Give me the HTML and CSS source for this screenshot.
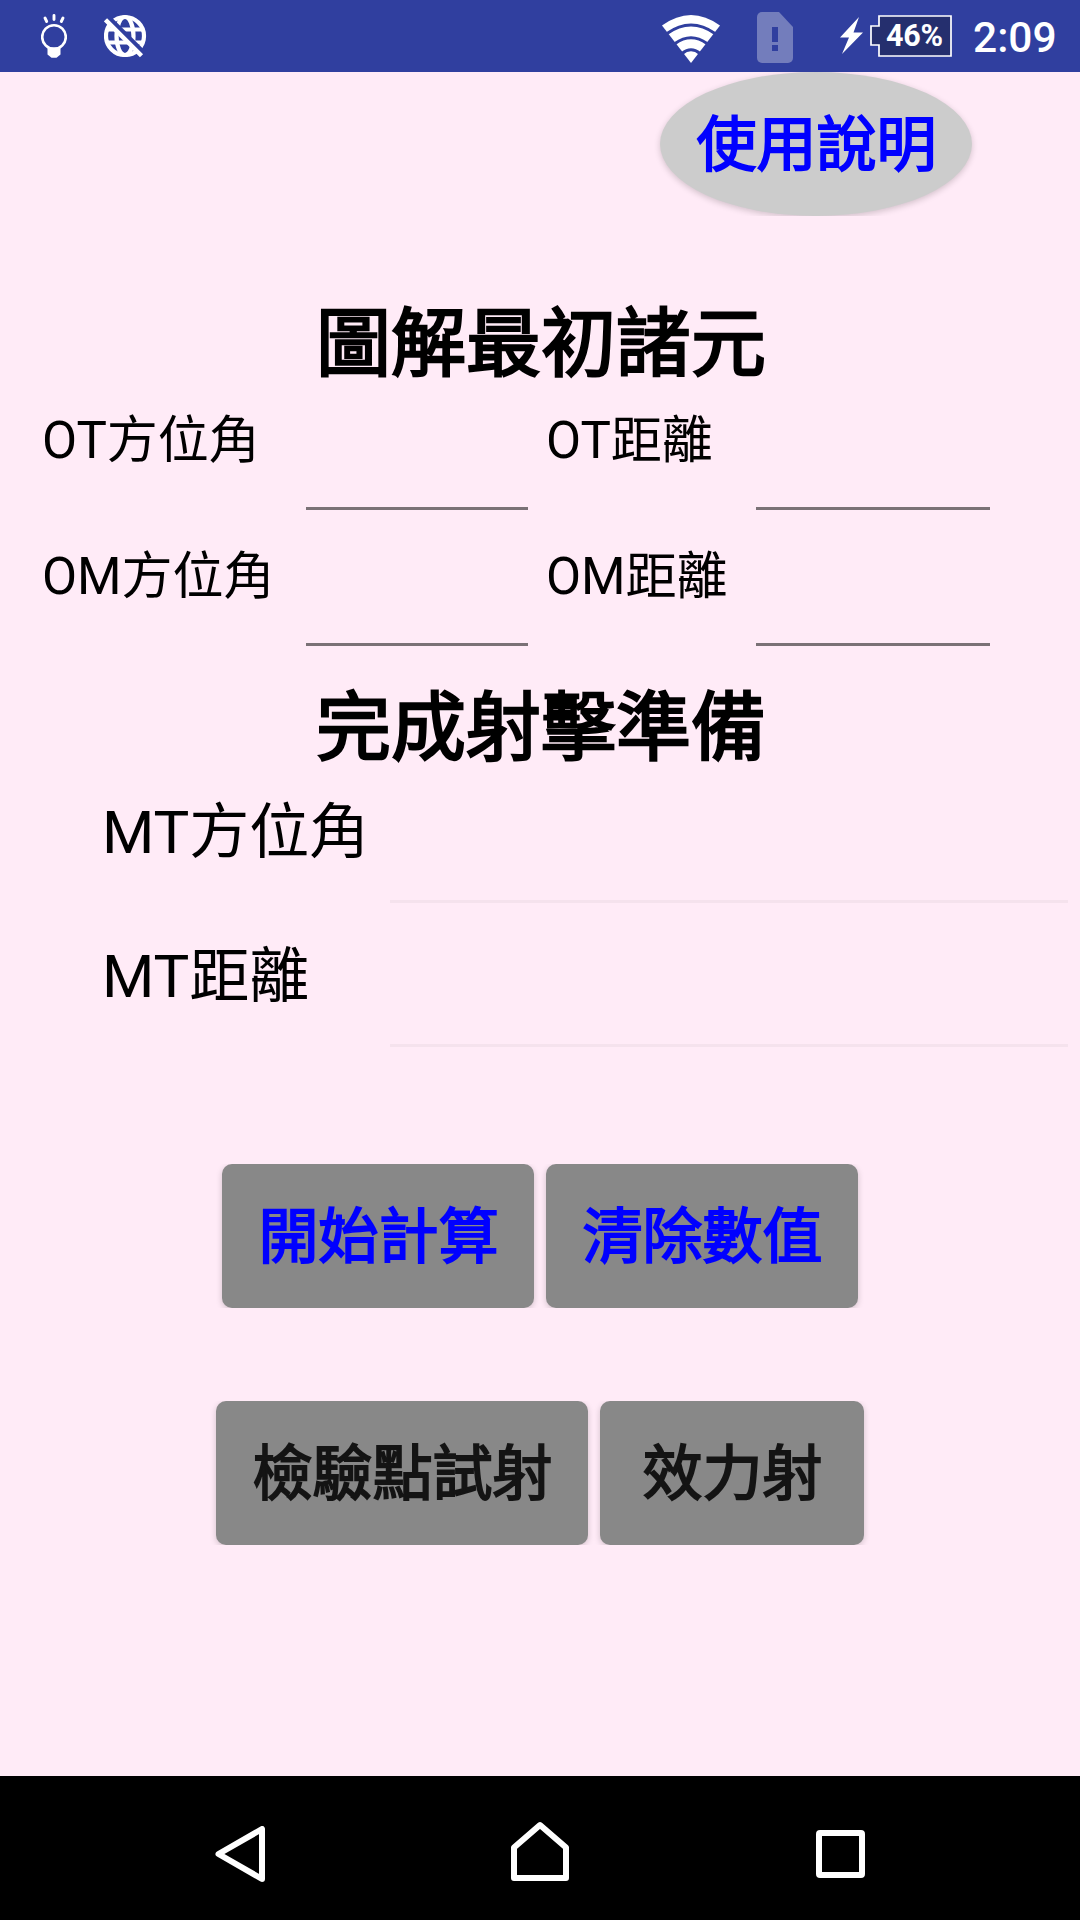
FILE: index.html
```html
<!DOCTYPE html>
<html lang="zh-Hant">
<head>
<meta charset="utf-8">
<title>圖解最初諸元</title>
<link rel="stylesheet" href="styles.css">
</head>
<body>
<header class="status">
  <svg class="bulb" width="26" height="44" viewBox="0 0 26 44"><circle cx="13" cy="23" r="11.800" fill="none" stroke="#fff" stroke-width="2.600"/><path d="M6.500 33.500h13v7l-4 3.200h-5l-4-3.200z" fill="#fff"/><path d="M13 1.500v4M4 4l1.700 3.500M22 4l-1.700 3.500" fill="none" stroke="#fff" stroke-width="2.900" stroke-linecap="round"/></svg>
  <svg class="globe" width="44" height="44" viewBox="0 0 44 44"><g fill="none" stroke="#fff" stroke-width="4.200"><circle cx="21" cy="22" r="19"/><ellipse cx="21" cy="22" rx="8.500" ry="19"/><path d="M4 15.500h35M4 28.500h35"/></g><path d="M4 3 40.500 39.500" stroke="#303f9f" stroke-width="4.600"/><path d="M1.500 5.800 37.500 41.800" stroke="#fff" stroke-width="4.400"/></svg>
  <svg class="wifi" width="58" height="48" viewBox="0 0 58 48"><path d="M0 10.500Q29-10.500 58 10.500L29 48z" fill="#fff"/><path d="M5 18.500Q29 1.500 53 18.500M13 28.500Q29 17 45 28.500M20 38.500Q29 31 38 38.500" fill="none" stroke="#303f9f" stroke-width="3"/></svg>
  <svg class="sim" width="36" height="51" viewBox="0 0 36 51"><path d="M5 0h17l14 15v31a5 5 0 0 1-5 5H5a5 5 0 0 1-5-5V5a5 5 0 0 1 5-5z" fill="#737dbc"/><path d="M15 15h6v15h-6zM15 33h6v6h-6z" fill="#303f9f"/></svg>
  <svg class="bolt" width="23" height="37" viewBox="0 0 23 37"><path d="M19 0 0 20.500h9L2 37l21-21.500h-9.500z" fill="#fff"/></svg>
  <div class="battery">
    <svg width="82" height="42" viewBox="0 0 82 42"><path d="M9 1h72v40H9V30H1V11h8z" fill="#252f6e" stroke="#fff" stroke-width="1.700"/></svg>
    <span class="percent">46%</span>
  </div>
  <time class="clock">2:09</time>
</header>
<main class="screen">
  <button class="help">使用說明</button>
  <h1 class="title">圖解最初諸元</h1>
  <div class="inputs">
    <label for="ot-az">OT方位角</label><input id="ot-az" class="az"><label for="ot-d">OT距離</label><input id="ot-d">
    <label for="om-az">OM方位角</label><input id="om-az" class="az"><label for="om-d">OM距離</label><input id="om-d">
  </div>
  <h1 class="title second">完成射擊準備</h1>
  <div class="results">
    <label for="mt-az">MT方位角</label><input id="mt-az" disabled>
    <label for="mt-d">MT距離</label><input id="mt-d" disabled>
  </div>
  <div class="actions">
    <button class="btn">開始計算</button><button class="btn">清除數值</button>
  </div>
  <div class="actions modes">
    <button class="btn dark wide">檢驗點試射</button><button class="btn dark narrow">效力射</button>
  </div>
</main>
<nav class="nav">
  <svg width="50" height="56" viewBox="0 0 50 56"><path d="M47 3v50L3.500 28z" fill="none" stroke="#fff" stroke-width="6" stroke-linejoin="round"/></svg>
  <svg width="58" height="60" viewBox="0 0 58 60"><path d="M3 57V26.500L29 4l26 22.500V57z" fill="none" stroke="#fff" stroke-width="6" stroke-linejoin="round"/></svg>
  <svg width="49" height="48" viewBox="0 0 49 48"><rect x="3" y="3" width="43" height="42" rx="1" fill="none" stroke="#fff" stroke-width="6" stroke-linejoin="round"/></svg>
</nav>
</body>
</html>
```
FILE: styles.css
```css
* { box-sizing: border-box; }
body {
  margin: 0;
  width: 1080px;
  height: 1920px;
  display: flex;
  flex-direction: column;
  overflow: hidden;
  background: #ffebf7;
  color: #000;
  font-family: Roboto, "Noto Sans CJK TC", sans-serif;
}
svg { display: block; flex: none; }

.status {
  height: 72px;
  display: flex;
  align-items: flex-start;
  background: #303f9f;
  color: #fff;
}
.bulb { margin: 14px 0 0 41px; }
.globe { margin: 14px 0 0 37px; }
.wifi { margin: 15px 0 0 514px; }
.sim { margin: 12px 0 0 37px; }
.bolt { margin: 17px 0 0 47px; }
.battery { display: grid; margin: 15px 0 0 7px; width: 82px; height: 42px; }
.battery > * { grid-area: 1 / 1; }
.percent { padding-left: 16px; font-size: 30.5px; font-weight: 700; line-height: 42px; letter-spacing: -.3px; }
.clock { margin-left: 21px; font-size: 42.5px; font-weight: 500; line-height: 75px; }

.screen { flex: 1; display: flex; flex-direction: column; }
/* Bold text is the regular face thickened by 1/32 em. */
button, .title { font-weight: 400; -webkit-text-stroke: .03125em currentColor; }
button {
  border: 0;
  padding: 4px 0 1px 1px;
  height: 144px;
  color: #00f;
  font: 400 60px/139px Roboto, "Noto Sans CJK TC", sans-serif;
  box-shadow: 0 2px 6px rgba(0, 0, 0, .18);
  clip-path: inset(0 -8px);
}
.help {
  align-self: flex-end;
  width: 312px;
  margin-right: 108px;
  border-radius: 50%;
  background: #ccc;
}
.title {
  margin: 73px 0 0;
  padding-left: 2px;
  height: 109px;
  line-height: 110px;
  font-size: 75px;
  text-align: center;
}
.inputs {
  display: grid;
  grid-template-columns: 259px 244px 206px 242px;
  grid-template-rows: 136px 136px;
  padding-left: 43px;
  font-size: 51px;
  line-height: 86px;
}
.inputs label:nth-of-type(odd) { margin-left: -1px; }
input {
  height: 3px;
  width: auto;
  min-width: 0;
  padding: 0;
  border: 0;
  background: #7a7176;
}
.inputs input { margin: 109px 4px 0; }
.inputs .az { margin-right: 18px; }
.second { margin-top: 3px; }
.results {
  display: grid;
  grid-template-columns: 288px 678px;
  grid-template-rows: 144px 144px;
  padding-left: 102px;
  font-size: 60px;
  line-height: 102px;
}
.results input { margin-top: 118px; background: #f5e2ed; }
.actions { display: flex; justify-content: center; gap: 12px; margin-top: 94px; }
.modes { margin-top: 93px; }
.btn { width: 312px; border-radius: 10px; background: #888; }
.dark { color: #141414; }
.wide { width: 372px; }
.narrow { width: 264px; }

.nav {
  height: 144px;
  display: flex;
  justify-content: space-between;
  align-items: center;
  padding: 11px 215px 0;
  background: #000;
}
.nav svg:nth-child(2) { margin: 0 1px 5px -1px; }
```
